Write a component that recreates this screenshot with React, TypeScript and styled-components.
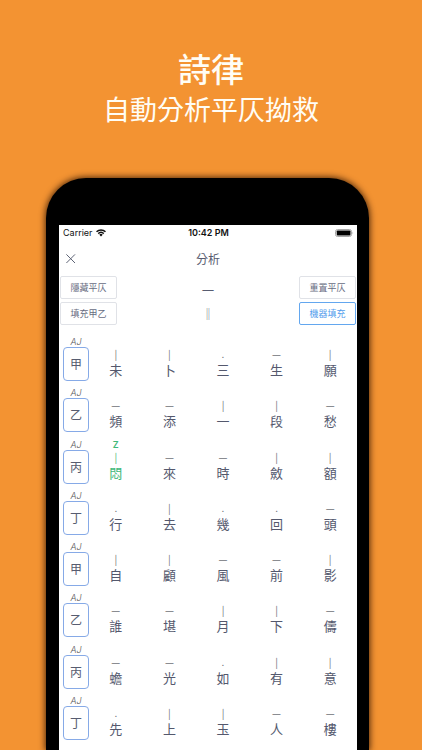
import React from 'react';
import styled, { createGlobalStyle } from 'styled-components';

const GlobalStyle = createGlobalStyle`
  * { box-sizing: border-box; }
  body {
    margin: 0;
    background: #f39332;
    font-family: "Noto Sans CJK TC", "Noto Sans", sans-serif;
    color: #4f5469;
  }
  button { font-family: inherit; cursor: pointer; }
`;

const Page = styled.main`
  min-height: 100vh;
  display: flex;
  flex-direction: column;
`;

const Headline = styled.header`
  padding: 48px 0 49px;
  text-align: center;
  color: #fffdf5;
`;

const Title = styled.h1`
  margin: 0;
  font-size: 33px;
  line-height: 41px;
  font-weight: 500;
`;

const Subtitle = styled.p`
  margin: 0;
  font-size: 27px;
  line-height: 40px;
`;

const Phone = styled.section`
  flex: 1;
  display: flex;
  flex-direction: column;
  margin: 0 53px 0 46px;
  padding: 47px 12px 0 13px;
  background: #000;
  border-radius: 40px 40px 0 0;
  box-shadow: 0 0 6px 1px rgba(40, 15, 0, 0.8);
`;

const Screen = styled.div`
  flex: 1;
  display: flex;
  flex-direction: column;
  background: #fff;
`;

const StatusBar = styled.div`
  display: grid;
  grid-template-columns: 1fr auto 1fr;
  align-items: center;
  height: 16px;
  padding: 0 3px 0 4px;
  font-family: Inter, sans-serif;
  font-size: 9px;
  line-height: 16px;
  color: #111;
`;

const Carrier = styled.span`
  display: flex;
  align-items: center;
  gap: 3px;
`;

const Clock = styled.span`
  font-weight: 600;
`;

const BatterySlot = styled.span`
  display: flex;
  justify-content: flex-end;
`;

const NavBar = styled.div`
  display: grid;
  grid-template-columns: 1fr auto 1fr;
  align-items: center;
  height: 35px;
  padding: 0 6px;
  opacity: 0.95;
`;

const CloseButton = styled.button`
  display: flex;
  padding: 0;
  border: 0;
  background: none;
  color: #555b6e;
  width: 12px;
`;

const NavTitle = styled.h2`
  margin: 0;
  font-size: 12px;
  line-height: 16px;
  font-weight: 400;
`;

const Controls = styled.div`
  display: grid;
  grid-template-columns: 57px 1fr 57px;
  gap: 3px 0;
  padding: 0 1px;
  align-items: center;
  opacity: 0.95;
`;

const ActionButton = styled.button<{ $primary?: boolean }>`
  height: 23px;
  padding: 0;
  border: 1px solid ${p => (p.$primary ? '#5ba3ef' : '#dfe1e6')};
  border-radius: 2px;
  background: #fff;
  color: ${p => (p.$primary ? '#4a98ec' : '#60657a')};
  font-size: 9px;
  line-height: 16px;
`;

const Legend = styled.span<{ $muted?: boolean }>`
  text-align: center;
  font-size: ${p => (p.$muted ? '12px' : '14px')};
  line-height: 16px;
  color: ${p => (p.$muted ? '#666a72' : '#4f5469')};
`;

const Poem = styled.div`
  flex: 1;
  display: grid;
  grid-auto-rows: 1fr;
  padding: 10px 0 5px;
  opacity: 0.95;
`;

const Line = styled.div`
  display: grid;
  grid-template-columns: 30px repeat(5, 1fr);
`;

const PatternCell = styled.div`
  display: flex;
  flex-direction: column;
  padding-left: 4px;
`;

const Tag = styled.span`
  height: 12px;
  font-family: Inter, sans-serif;
  font-size: 9px;
  line-height: 13px;
  font-style: italic;
  font-weight: 300;
  text-align: center;
  color: #555;
`;

const PatternButton = styled.button`
  height: 34px;
  padding: 0;
  border: 1px solid #80a6e6;
  border-radius: 4px;
  background: #fff;
  color: #4f5469;
  font-size: 12px;
  line-height: 16px;
`;

const CharCell = styled.div<{ $fixed?: boolean }>`
  display: flex;
  flex-direction: column;
  align-items: center;
  color: ${p => (p.$fixed ? '#34b572' : '#4b5066')};
`;

const Note = styled.span`
  height: 12px;
  font-family: Inter, sans-serif;
  font-size: 9px;
  line-height: 13px;
  font-weight: 600;
`;

const Tone = styled.span<{ $fixed?: boolean }>`
  height: 14px;
  font-size: 10px;
  line-height: 13px;
  color: ${p => (p.$fixed ? '#34b572' : '#686b72')};
`;

const Char = styled.span`
  font-size: 13px;
  line-height: 18px;
`;

const WifiIcon = () => (
  <svg width="10" height="8" viewBox="0 0 20 16" aria-hidden="true">
    <g fill="none" stroke="#111" strokeWidth="3">
      <path d="M1 5.5a13 13 0 0 1 18 0" />
      <path d="M4.5 9.2a8 8 0 0 1 11 0" />
    </g>
    <path d="M6.6 11.4a4.8 4.8 0 0 1 6.8 0L10 15z" fill="#111" />
  </svg>
);

const BatteryIcon = () => (
  <svg width="19" height="8" viewBox="0 0 19 8" aria-hidden="true">
    <rect x="0.5" y="0.5" width="16" height="7" rx="2" fill="#fff" stroke="#a8a8a8" />
    <rect x="1.7" y="1.5" width="13.8" height="5" rx="0.8" fill="#000" />
    <path d="M17.6 2.6q1.2 1.4 0 2.8z" fill="#999" />
  </svg>
);

const CloseIcon = () => (
  <svg width="12" height="12" viewBox="0 0 12 12" aria-hidden="true">
    <path d="M1.4 1.4l8.6 8.6M10 1.4l-8.6 8.6" stroke="currentColor" strokeWidth="1" />
  </svg>
);

type PoemLine = { pattern: string; chars: string; tones: string; fix?: number };

const lines: PoemLine[] = [
  { pattern: '甲', chars: '未卜三生願', tones: '||.—|' },
  { pattern: '乙', chars: '頻添一段愁', tones: '——||—' },
  { pattern: '丙', chars: '悶來時斂額', tones: '|——||', fix: 0 },
  { pattern: '丁', chars: '行去幾回頭', tones: '.|..—' },
  { pattern: '甲', chars: '自顧風前影', tones: '||——|' },
  { pattern: '乙', chars: '誰堪月下儔', tones: '——||—' },
  { pattern: '丙', chars: '蟾光如有意', tones: '——.||' },
  { pattern: '丁', chars: '先上玉人樓', tones: '.||——' },
];

export default function App() {
  return (
    <>
      <GlobalStyle />
      <Page>
        <Headline>
          <Title>詩律</Title>
          <Subtitle>自動分析平仄拗救</Subtitle>
        </Headline>
        <Phone>
          <Screen>
            <StatusBar>
              <Carrier>Carrier <WifiIcon /></Carrier>
              <Clock>10:42 PM</Clock>
              <BatterySlot><BatteryIcon /></BatterySlot>
            </StatusBar>
            <NavBar>
              <CloseButton aria-label="關閉"><CloseIcon /></CloseButton>
              <NavTitle>分析</NavTitle>
            </NavBar>
            <Controls>
              <ActionButton>隱藏平仄</ActionButton>
              <Legend>—</Legend>
              <ActionButton>重置平仄</ActionButton>
              <ActionButton>填充甲乙</ActionButton>
              <Legend $muted>‖</Legend>
              <ActionButton $primary>機器填充</ActionButton>
            </Controls>
            <Poem>
              {lines.map((line, row) => (
                <Line key={row}>
                  <PatternCell>
                    <Tag>AJ</Tag>
                    <PatternButton>{line.pattern}</PatternButton>
                  </PatternCell>
                  {[...line.chars].map((char, col) => (
                    <CharCell key={col} $fixed={line.fix === col}>
                      <Note>{line.fix === col ? 'Z' : ''}</Note>
                      <Tone $fixed={line.fix === col}>{line.tones[col]}</Tone>
                      <Char>{char}</Char>
                    </CharCell>
                  ))}
                </Line>
              ))}
            </Poem>
          </Screen>
        </Phone>
      </Page>
    </>
  );
}
